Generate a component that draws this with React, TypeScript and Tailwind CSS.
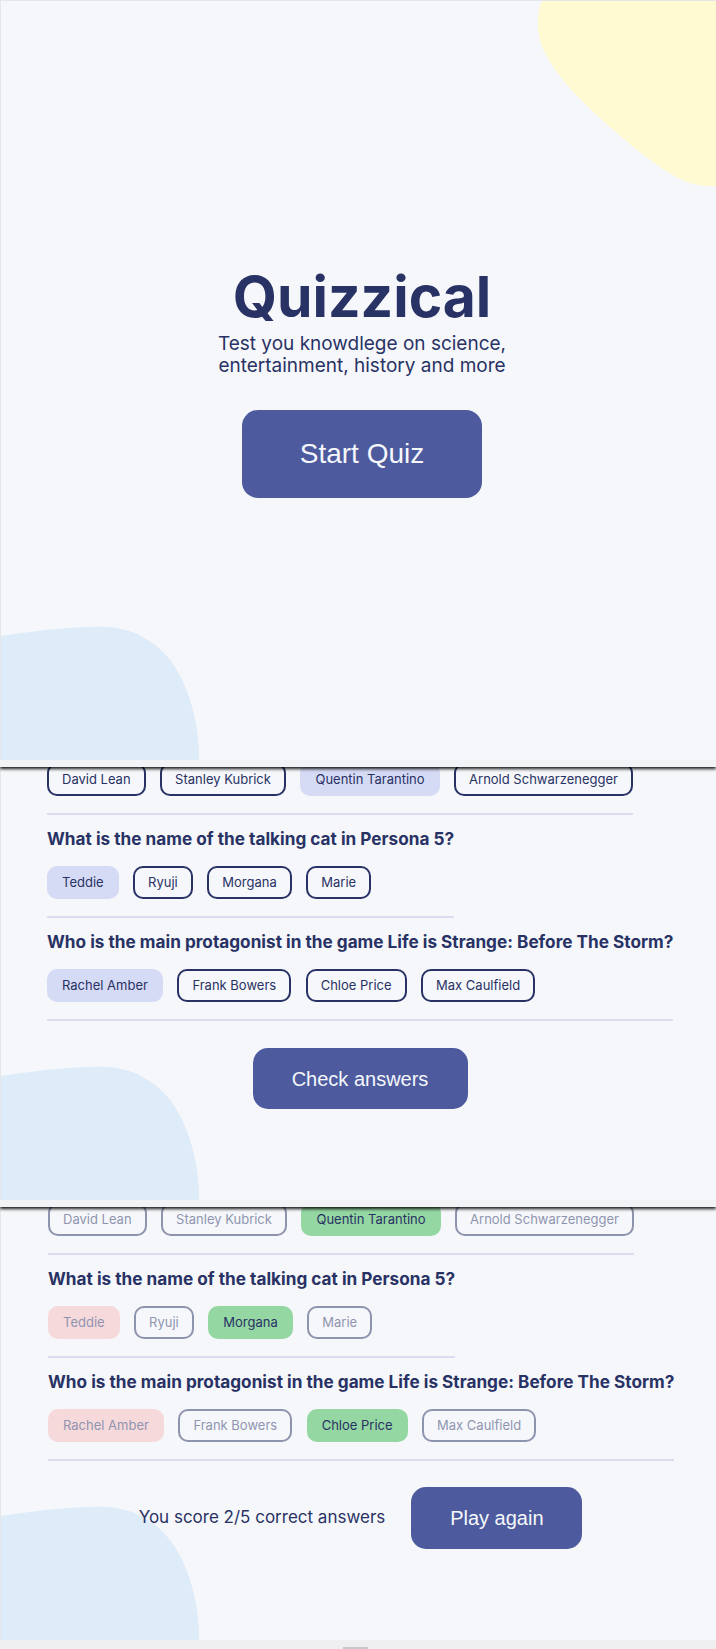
import React from 'react';

type AnswerState = 'idle' | 'selected' | 'correct' | 'wrong' | 'faded';

interface Question {
  text?: string;
  answers: { label: string; state: AnswerState }[];
}

const answerTheme: Record<AnswerState, string> = {
  idle: 'border-[#293264] bg-transparent',
  selected: 'border-[#D6DBF5] bg-[#D6DBF5]',
  correct: 'border-[#94D7A2] bg-[#94D7A2]',
  wrong: 'border-[#F8BCBC] bg-[#F8BCBC] opacity-50',
  faded: 'border-[#293264] bg-transparent opacity-50',
};

// panel 2: picking answers
const picking: Question[] = [
  {
    answers: [
      { label: 'David Lean', state: 'idle' },
      { label: 'Stanley Kubrick', state: 'idle' },
      { label: 'Quentin Tarantino', state: 'selected' },
      { label: 'Arnold Schwarzenegger', state: 'idle' },
    ],
  },
  {
    text: 'What is the name of the talking cat in Persona 5?',
    answers: [
      { label: 'Teddie', state: 'selected' },
      { label: 'Ryuji', state: 'idle' },
      { label: 'Morgana', state: 'idle' },
      { label: 'Marie', state: 'idle' },
    ],
  },
  {
    text: 'Who is the main protagonist in the game Life is Strange: Before The Storm?',
    answers: [
      { label: 'Rachel Amber', state: 'selected' },
      { label: 'Frank Bowers', state: 'idle' },
      { label: 'Chloe Price', state: 'idle' },
      { label: 'Max Caulfield', state: 'idle' },
    ],
  },
];

// panel 3: checked results
const checked: Question[] = [
  {
    answers: [
      { label: 'David Lean', state: 'faded' },
      { label: 'Stanley Kubrick', state: 'faded' },
      { label: 'Quentin Tarantino', state: 'correct' },
      { label: 'Arnold Schwarzenegger', state: 'faded' },
    ],
  },
  {
    text: 'What is the name of the talking cat in Persona 5?',
    answers: [
      { label: 'Teddie', state: 'wrong' },
      { label: 'Ryuji', state: 'faded' },
      { label: 'Morgana', state: 'correct' },
      { label: 'Marie', state: 'faded' },
    ],
  },
  {
    text: 'Who is the main protagonist in the game Life is Strange: Before The Storm?',
    answers: [
      { label: 'Rachel Amber', state: 'wrong' },
      { label: 'Frank Bowers', state: 'faded' },
      { label: 'Chloe Price', state: 'correct' },
      { label: 'Max Caulfield', state: 'faded' },
    ],
  },
];

const BlueBlob = () => (
  <svg className="absolute bottom-0 left-0" width="200" height="135" viewBox="0 0 200 135">
    <path d="M0 11 C35 6 75 1 105 2 C135 3 160 20 174 42 C190 68 198 100 198 135 L0 135 Z" fill="#DEEBF8" />
  </svg>
);

const AnswerRow = ({ answers }: { answers: Question['answers'] }) => (
  <div className="flex gap-[14.5px]">
    {answers.map((a) => (
      <button
        key={a.label}
        className={`rounded-[10px] border-2 px-[13px] py-[6px] text-[13px] leading-[17px] text-[#293264] ${answerTheme[a.state]}`}
      >
        {a.label}
      </button>
    ))}
  </div>
);

const QuestionList = ({ items }: { items: Question[] }) => (
  <div className="relative flex flex-col items-start">
    {items.map((q, i) =>
      q.text ? (
        <div key={i} className="w-fit border-b-2 border-[#DBDEF0] pt-[14px] pb-[17px]">
          <h2 className="text-[17.2px] font-bold leading-[20px] text-[#293264]">{q.text}</h2>
          <div className="mt-[17px]">
            <AnswerRow answers={q.answers} />
          </div>
        </div>
      ) : (
        <div key={i} className="mt-[-4px] w-fit border-b-2 border-[#DBDEF0] pb-[17px]">
          <AnswerRow answers={q.answers} />
        </div>
      )
    )}
  </div>
);

export default function App() {
  return (
    <div className="w-[716px] bg-[#f5f7fb] font-['Inter','Noto_Sans',sans-serif] text-[#293264]">
      {/* start screen */}
      <section className="relative z-30 h-[767px] bg-[#f2f3f6] shadow-[0_2px_3px_rgba(0,0,0,0.9)]">
        <div className="relative h-[760px] overflow-hidden border-l border-t border-[#e5e6ea] bg-[#f5f7fb]">
          <svg className="absolute right-0 top-0" width="180" height="186" viewBox="0 0 180 186">
            <path d="M6 0 C1 10 0 30 6 45 C20 80 60 115 100 148 C130 172 150 184 170 185 L180 185 L180 0 Z" fill="#FFFAD1" />
          </svg>
          <BlueBlob />
          <div className="relative flex flex-col items-center pl-[7px] pt-[267px]">
            <h1 className="text-[57px] font-bold leading-[57px]">Quizzical</h1>
            <p className="mt-[8px] text-center text-[19px] leading-[22px]">
              Test you knowdlege on science,
              <br />
              entertainment, history and more
            </p>
            <button className="mt-[33px] h-[88px] w-[240px] rounded-[16px] bg-[#4D5B9E] font-['Liberation_Sans',Arial,sans-serif] text-[28px] text-[#F5F7FB]">
              Start Quiz
            </button>
          </div>
        </div>
      </section>

      {/* answering */}
      <section className="relative z-20 h-[440px] bg-[#f2f3f6] shadow-[0_2px_3px_rgba(0,0,0,0.9)]">
        <div className="relative h-[433px] overflow-hidden border-l border-[#e5e6ea] bg-[#f5f7fb]">
          <BlueBlob />
          <div className="relative pl-[46px]">
            <QuestionList items={picking} />
          </div>
          <div className="relative mt-[27px] flex justify-center pl-[3px]">
            <button className="h-[61px] w-[215px] rounded-[15px] bg-[#4D5B9E] font-['Liberation_Sans',Arial,sans-serif] text-[20px] text-[#F5F7FB]">
              Check answers
            </button>
          </div>
        </div>
      </section>

      {/* results */}
      <section className="relative z-10 h-[442px] bg-[#efeff2]">
        <div className="relative h-[433px] overflow-hidden border-l border-[#e5e6ea] bg-[#f5f7fb]">
          <BlueBlob />
          <div className="relative pl-[47px]">
            <QuestionList items={checked} />
          </div>
          <div className="relative mt-[26px] flex items-center justify-center gap-[26px] pl-[4px]">
            <span className="text-[17px] text-[#293264]">You score 2/5 correct answers</span>
            <button className="h-[62px] w-[171px] rounded-[15px] bg-[#4D5B9E] font-['Liberation_Sans',Arial,sans-serif] text-[20px] text-[#F5F7FB]">
              Play again
            </button>
          </div>
        </div>
        <div className="flex h-[9px] items-end justify-center pr-[5px]">
          <div className="h-[2px] w-[25px] bg-[#c9c9cc]" />
        </div>
      </section>
    </div>
  );
}
